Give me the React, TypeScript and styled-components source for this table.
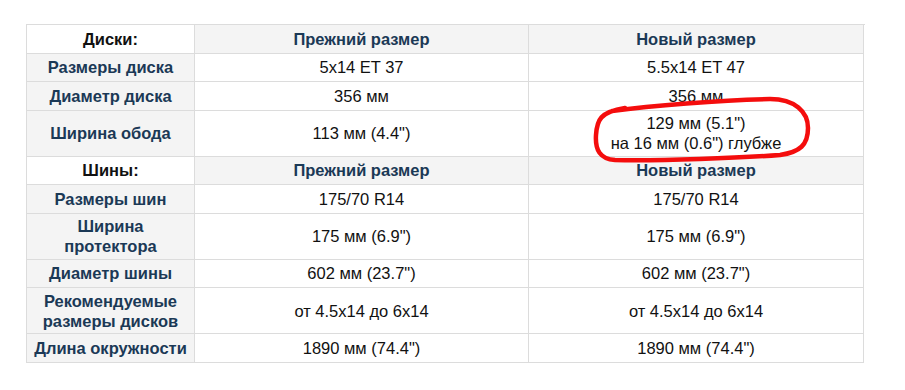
import React from 'react';
import styled, { createGlobalStyle } from 'styled-components';

const GlobalStyle = createGlobalStyle`
  html, body {
    margin: 0;
    padding: 0;
    background: #ffffff;
  }
  body {
    font-family: "Liberation Sans", Arial, sans-serif;
  }
`;

const Page = styled.div`
  position: relative;
  width: 905px;
  height: 390px;
  padding: 24px 0 0 26px;
  box-sizing: border-box;
`;

const Grid = styled.div`
  display: grid;
  grid-template-columns: 168px 334px 335px;
  width: 838px;
  border-left: 1px solid #dcdcdc;
  border-top: 1px solid #dcdcdc;
`;

const Cell = styled.div<{ $gray?: boolean; $kind?: 'label' | 'title' | 'head' | 'value' }>`
  display: flex;
  align-items: center;
  justify-content: center;
  text-align: center;
  box-sizing: border-box;
  min-height: 28.5px;
  padding: 2.5px 4px;
  border-right: 1px solid #dcdcdc;
  border-bottom: 1px solid #dcdcdc;
  background: ${(p) => (p.$gray ? '#f4f4f4' : '#ffffff')};
  font-size: 16.5px;
  line-height: 20px;
  font-weight: ${(p) => (p.$kind === 'value' ? 400 : 700)};
  color: ${(p) =>
    p.$kind === 'title' ? '#111111' : p.$kind === 'value' ? '#111111' : '#1b3956'};
`;

const Annotation = styled.svg`
  position: absolute;
  left: 0;
  top: 0;
  width: 905px;
  height: 390px;
  pointer-events: none;
`;

type Row = { label: React.ReactNode; prev: React.ReactNode; next: React.ReactNode };

const sections: { title: string; rows: Row[] }[] = [
  {
    title: 'Диски:',
    rows: [
      { label: 'Размеры диска', prev: '5x14 ET 37', next: '5.5x14 ET 47' },
      { label: 'Диаметр диска', prev: '356 мм', next: '356 мм' },
      {
        label: 'Ширина обода',
        prev: '113 мм (4.4")',
        next: (
          <>
            129 мм (5.1")
            <br />
            на 16 мм (0.6") глубже
          </>
        ),
      },
    ],
  },
  {
    title: 'Шины:',
    rows: [
      { label: 'Размеры шин', prev: '175/70 R14', next: '175/70 R14' },
      {
        label: (
          <>
            Ширина
            <br />
            протектора
          </>
        ),
        prev: '175 мм (6.9")',
        next: '175 мм (6.9")',
      },
      { label: 'Диаметр шины', prev: '602 мм (23.7")', next: '602 мм (23.7")' },
      {
        label: (
          <>
            Рекомендуемые
            <br />
            размеры дисков
          </>
        ),
        prev: 'от 4.5x14 до 6x14',
        next: 'от 4.5x14 до 6x14',
      },
      { label: 'Длина окружности', prev: '1890 мм (74.4")', next: '1890 мм (74.4")' },
    ],
  },
];

const App: React.FC = () => {
  return (
    <Page>
      <GlobalStyle />
      <Grid>
        {sections.map((s) => (
          <React.Fragment key={s.title}>
            <Cell $kind="title">{s.title}</Cell>
            <Cell $kind="head" $gray>Прежний размер</Cell>
            <Cell $kind="head" $gray>Новый размер</Cell>
            {s.rows.map((r, i) => (
              <React.Fragment key={i}>
                <Cell $kind="label" $gray>{r.label}</Cell>
                <Cell $kind="value">{r.prev}</Cell>
                <Cell $kind="value">{r.next}</Cell>
              </React.Fragment>
            ))}
          </React.Fragment>
        ))}
      </Grid>
      <Annotation viewBox="0 0 905 390">
        <path
          d="M 612 111 C 650 106, 720 100, 770 99 C 795 99, 808 112, 808 128 C 808 145, 800 152, 780 155 C 740 158, 660 161, 615 160 C 600 159, 595 150, 596 135 C 597 120, 600 112, 625 108"
          fill="none"
          stroke="#f40d0d"
          strokeWidth="4.5"
          strokeLinecap="round"
          strokeLinejoin="round"
        />
      </Annotation>
    </Page>
  );
};

export default App;
